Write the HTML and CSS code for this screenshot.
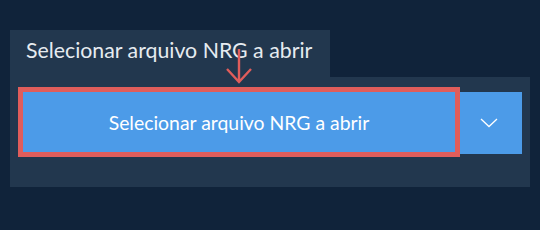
FILE: index.html
```html
<!DOCTYPE html>
<html lang="pt">
<head>
    <meta charset="UTF-8">
    <title>Selecionar arquivo NRG</title>
    <link rel="stylesheet" href="styles.css">
</head>
<body>
    <div class="wrap">
        <div class="tab">Selecionar arquivo NRG a abrir</div>
        <div class="panel">
            <div class="btn-group">
                <button class="btn-main">Selecionar arquivo NRG a abrir</button>
                <button class="btn-drop">
                    <svg width="18" height="10" viewBox="0 0 18 10"><path d="M1 1 L9 8.5 L17 1" fill="none" stroke="#ffffff" stroke-width="1.3"/></svg>
                </button>
                <div class="highlight"></div>
                <svg class="arrow" width="30" height="36" viewBox="0 0 30 36">
                    <path d="M15 0 L15 33 M3 20 L15 33 L27 20" fill="none" stroke="#e05d5b" stroke-width="2.4"/>
                </svg>
            </div>
        </div>
    </div>
</body>
</html>
```

FILE: styles.css
```css
body {
    margin: 0;
    background-color: #10233a;
    font-family: 'Lato', sans-serif;
}
.wrap {
    padding: 30px 10px 0 10px;
}
.tab {
    width: 304px;
    height: 47px;
    padding-left: 16px;
    background-color: #22374e;
    color: #e6ebf0;
    font-size: 21.3px;
    line-height: 40px;
    white-space: nowrap;
}
.panel {
    width: 507px;
    height: 95px;
    padding: 15px 0 0 13px;
    background-color: #22374e;
}
.btn-group {
    display: flex;
    position: relative;
    width: 499px;
}
.btn-main {
    width: 432px;
    height: 60px;
    border: none;
    background-color: #4c9be8;
    color: #ffffff;
    font-family: 'Lato', sans-serif;
    font-size: 19.4px;
    padding: 0;
}
.btn-drop {
    width: 67px;
    height: 62px;
    border: none;
    background-color: #4c9be8;
    display: flex;
    align-items: center;
    justify-content: center;
    padding: 0;
}
.highlight {
    position: absolute;
    left: -5px;
    top: -5px;
    width: 432px;
    height: 60px;
    border: 5px solid #e05d5b;
}
.arrow {
    position: absolute;
    left: 201px;
    top: -43px;
}
```
